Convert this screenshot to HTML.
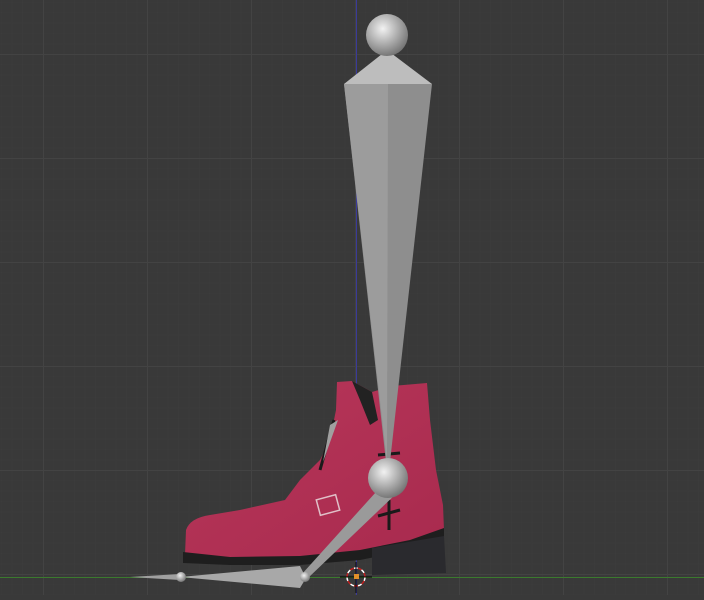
<!DOCTYPE html>
<html><head><style>html,body{margin:0;padding:0;background:#393939;overflow:hidden}</style></head>
<body>
<svg width="704" height="595" viewBox="0 0 704 595" xmlns="http://www.w3.org/2000/svg">
<defs>
<pattern id="fine" width="10.4" height="10.4" patternUnits="userSpaceOnUse" x="43" y="54">
<path d="M0 0H10.4M0 0V10.4" stroke="#3c3c3c" stroke-width="1"/>
</pattern>
<pattern id="major" width="104" height="104" patternUnits="userSpaceOnUse" x="43" y="54">
<path d="M0 0.5H104M0.5 0V104" stroke="#434343" stroke-width="1"/>
</pattern>
<radialGradient id="sph" cx="0.4" cy="0.35" r="0.7">
<stop offset="0" stop-color="#f2f2f2"/><stop offset="0.5" stop-color="#b0b0b0"/><stop offset="1" stop-color="#6e6e6e"/>
</radialGradient>
<linearGradient id="boot" x1="0" y1="0" x2="1" y2="1">
<stop offset="0" stop-color="#b8375a"/><stop offset="1" stop-color="#a82a4e"/>
</linearGradient>
</defs>
<rect width="704" height="595" fill="#393939"/>
<rect width="704" height="595" fill="url(#fine)"/>
<rect width="704" height="595" fill="url(#major)"/>
<line x1="356.5" y1="0" x2="356.5" y2="595" stroke="#3a3a9a" stroke-width="1"/>
<line x1="0" y1="577.5" x2="704" y2="577.5" stroke="#3b7a2e" stroke-width="1"/>
<!-- boot -->
<path d="M337 382 L352 381 L372 392 L392 386 L427 383 L430 420 L436 470 L443 505 L444 530 L430 538 L400 545 L360 552 L320 556 L270 558 L220 558 L185 555 L186 530 Q190 518 210 515 L240 510 L285 500 L300 480 L320 460 L330 440 L336 410 Z" fill="url(#boot)"/>
<path d="M352 381 L372 392 L378 420 L370 425 L360 400 Z" fill="#222"/>
<path d="M183 552 L230 557 L300 556 L360 550 L410 540 L444 528 L444 540 L400 552 L360 560 L300 565 L230 565 L183 563 Z" fill="#1e1e1e"/>
<path d="M372 548 L444 536 L446 573 L372 575 Z" fill="#2a2a2e"/>
<rect x="318" y="497" width="20" height="16" fill="none" stroke="#e0c0c8" stroke-width="1.5" transform="rotate(-15 328 505)"/>
<line x1="389" y1="500" x2="389" y2="530" stroke="#1a1a1a" stroke-width="3"/>
<line x1="378" y1="516" x2="400" y2="510" stroke="#1a1a1a" stroke-width="3"/>
<line x1="378" y1="455" x2="400" y2="453" stroke="#1a1a1a" stroke-width="3"/>
<line x1="334" y1="420" x2="320" y2="470" stroke="#1a1a1a" stroke-width="3"/>
<!-- bones -->
<polygon points="387,50 344,84 432,84" fill="#bdbdbd"/>
<polygon points="344,84 432,84 390,462 386,462" fill="#8e8e8e"/>
<polygon points="344,84 388,84 387,462" fill="#9c9c9c"/>
<polygon points="338,420 330,425 323,462" fill="#a0a0a0"/>
<polygon points="385,482 398,492 308,578 302,574" fill="#9a9a9a"/>
<polygon points="300,566 306,578 300,588 180,577" fill="#a8a8a8"/>
<polygon points="180,574 130,577 180,580" fill="#a0a0a0"/>
<circle cx="387" cy="35" r="21" fill="url(#sph)"/>
<circle cx="388" cy="478" r="20" fill="url(#sph)"/>
<circle cx="305" cy="577" r="5" fill="url(#sph)"/>
<circle cx="181" cy="577" r="5" fill="url(#sph)"/>
<!-- 3d cursor -->
<circle cx="356" cy="577" r="9" fill="none" stroke="#fff" stroke-width="1.5" stroke-dasharray="4 4"/>
<circle cx="356" cy="577" r="9" fill="none" stroke="#c02020" stroke-width="1.5" stroke-dasharray="4 4" stroke-dashoffset="4"/>
<line x1="340" y1="577" x2="372" y2="577" stroke="#000" stroke-width="1"/>
<line x1="356" y1="562" x2="356" y2="593" stroke="#000" stroke-width="1"/>
<rect x="354" y="574" width="5" height="5" fill="#e0902a"/>
</svg>
</body></html>
